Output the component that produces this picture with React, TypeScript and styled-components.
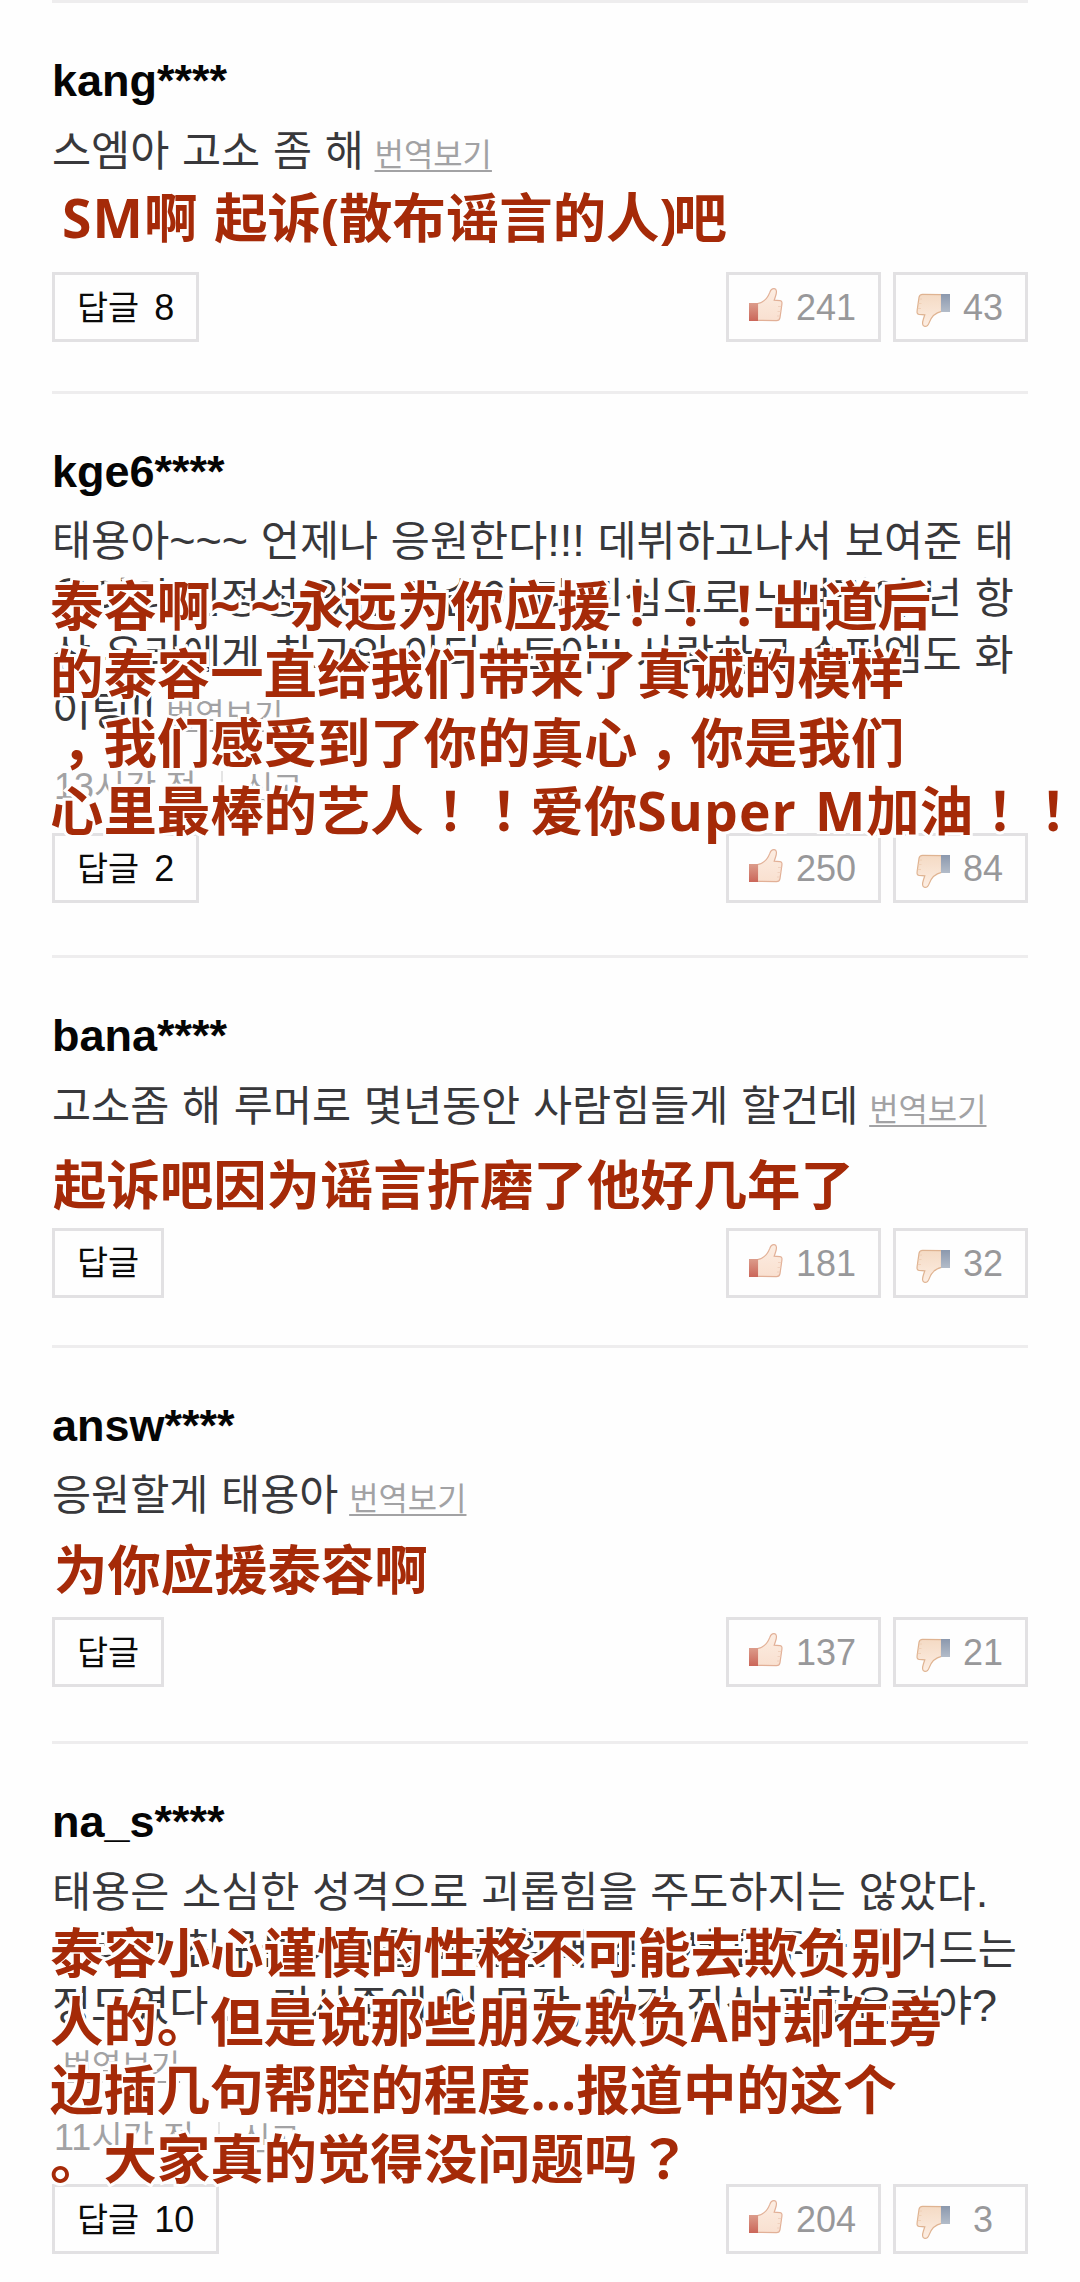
import React, { Fragment } from "react";
import styled, { createGlobalStyle } from "styled-components";

const latin = '"Liberation Sans", Arial';
const korean = `${latin}, "Noto Sans CJK KR", sans-serif`;
const chinese = '"Open Sans", "Noto Sans CJK SC", sans-serif';

const GlobalStyle = createGlobalStyle`
  body {
    margin: 0;
    background: #fefefe;
    font-family: ${korean};
  }
`;

const Page = styled.main`
  box-sizing: border-box;
  width: 1080px;
  height: 2282px;
  padding: 0 52px;
  overflow: hidden;
`;

const Item = styled.article<{ $after: number }>`
  position: relative;
  border-top: 3px solid #eeedee;
  padding: 53px 0 ${(p) => p.$after}px;
`;

const Author = styled.h2`
  margin: 0 0 17.5px;
  font: bold 45px/50px ${latin}, sans-serif;
  color: #050505;
`;

const Content = styled.div`
  font-size: 42.5px;
  word-spacing: 0.9px;
  color: #38383b;
  white-space: pre;
`;

const TextLine = styled.div`
  height: 56.8px;
  line-height: 56.8px;
`;

const Punctuation = styled.span`
  font-size: 45px;
  line-height: 0;
`;

const TranslateLink = styled.a`
  margin-left: -2px;
  font-size: 31.9px;
  line-height: 0;
  color: #a2a2a4;
  text-decoration: underline;
  text-decoration-thickness: 2px;
  text-underline-offset: 4px;
`;

const Meta = styled.div`
  display: flex;
  align-items: center;
  height: 44px;
  margin: 21.5px 0 26.5px;
  padding-left: 2px;
  font-size: 33.8px;
  color: #a2a2a4;
`;

const Divider = styled.span`
  width: 2px;
  height: 27px;
  margin: 0 21px 0 24px;
  background: #e4e4e4;
`;

const Report = styled.span`
  font-size: 31.9px;
`;

const Num = styled.span`
  font-size: 36px;
`;

const Actions = styled.div`
  display: flex;
  justify-content: space-between;
`;

const Votes = styled.div`
  display: flex;
  gap: 12px;
`;

const Button = styled.button`
  box-sizing: border-box;
  display: flex;
  align-items: center;
  height: 70px;
  border: 3px solid #e2e1e3;
  background: transparent;
  font-family: ${korean};
`;

const ReplyButton = styled(Button)`
  gap: 15px;
  padding: 0 22px;
  font-size: 33.8px;
  color: #0a0a0a;
`;

const ReplyLabel = styled.span`
  margin-bottom: 4px;
`;

const ReplyCount = styled(Num)`
  padding-top: 2px;
`;

const VoteButton = styled(Button)`
  gap: 13px;
  padding: 0 22px 0 20px;
  font-size: 36px;
  color: #98989a;
`;

const Count = styled.span`
  min-width: 40px;
  padding-top: 2px;
  text-align: center;
`;

const Translation = styled.div<{ $top: number; $left: number }>`
  position: absolute;
  top: ${(p) => p.$top}px;
  left: ${(p) => p.$left}px;
  font: bold 53.4px/68.5px ${chinese};
  color: #a52a08;
  word-spacing: 3px;
  white-space: pre;
  -webkit-text-stroke: 6px #fefefe;
  paint-order: stroke fill;
`;

const Line = styled.div`
  height: 68.5px;
`;

const CenteredMark = styled.span`
  font-family: "Noto Sans CJK TC", sans-serif;
  line-height: 0;
`;

const Comma = styled.span`
  display: inline-block;
  width: 1em;
  line-height: 1;
  text-indent: 0.22em;
`;

const Spaced = styled.span<{ $by: number }>`
  letter-spacing: ${(p) => p.$by}px;
`;

const Glyph = styled.svg<{ $drop: number }>`
  display: block;
  width: 34px;
  height: 34px;
  margin-top: ${(p) => p.$drop}px;
  overflow: visible;
`;

const HAND =
  "M8.5 15.6C14 14.4 18.6 10.4 20.8 4.4C21.8 1.4 23.4.5 25.2.6C28 .8 27.8 4.4 26.6 8L25.2 12.2L31 12.6C33 12.8 33.2 14.2 32.8 17L31 29.6C30.6 32 29.6 32.6 27.4 32.6L8.5 32.4Z";

function ThumbUp() {
  return (
    <Glyph $drop={-4} viewBox="0 0 34 34" aria-hidden="true">
      <defs>
        <linearGradient id="cuffUp" x1="0" y1="0" x2="0" y2="1">
          <stop offset="0" stopColor="#dc9c8b" />
          <stop offset="1" stopColor="#cb6659" />
        </linearGradient>
        <linearGradient id="skinUp" x1="0" y1="0" x2="0" y2="1">
          <stop offset="0" stopColor="#fcede2" />
          <stop offset="1" stopColor="#f9e0d0" />
        </linearGradient>
      </defs>
      <path d={HAND} fill="url(#skinUp)" stroke="#e2b097" strokeWidth="1.2" />
      <path d="M29 18.5h3.4M28.5 23.5h3M28 28h3" stroke="#eecbb7" strokeWidth="0.8" />
      <rect y="15" width="9" height="18" fill="url(#cuffUp)" />
    </Glyph>
  );
}

function ThumbDown() {
  return (
    <Glyph $drop={6} viewBox="0 0 34 34" aria-hidden="true">
      <defs>
        <linearGradient id="cuffDown" x1="0" y1="0" x2="0" y2="1">
          <stop offset="0" stopColor="#8b98ad" />
          <stop offset="1" stopColor="#b3bcc9" />
        </linearGradient>
        <linearGradient id="skinDown" x1="0" y1="0" x2="0" y2="1">
          <stop offset="0" stopColor="#fdeee3" />
          <stop offset="1" stopColor="#f4dac4" />
        </linearGradient>
      </defs>
      <g transform="rotate(180 17 17)">
        <path d={HAND} fill="url(#skinDown)" stroke="#dfb391" strokeWidth="1.2" />
        <path d="M29 18.5h3.4M28.5 23.5h3M28 28h3" stroke="#eecbb0" strokeWidth="0.8" />
      </g>
      <rect x="25" y="1" width="9" height="18" fill="url(#cuffDown)" />
    </Glyph>
  );
}

function Marked({ text }: { text: string }) {
  return (
    <>
      {text.split(/([！？]+|，|~+|[A-Za-z]+ ?|\))/).map((part, i) => {
        if (part === "，") return <Comma key={i}>{part}</Comma>;
        if (/^[！？]/.test(part)) return <CenteredMark key={i}>{part}</CenteredMark>;
        if (/^~/.test(part)) return <Spaced key={i} $by={9.5}>{part}</Spaced>;
        if (/^[A-Za-z]/.test(part)) return <Spaced key={i} $by={1.1}>{part}</Spaced>;
        if (part === ")") return <Spaced key={i} $by={-4}>{part}</Spaced>;
        return <Fragment key={i}>{part}</Fragment>;
      })}
    </>
  );
}

function Punctuated({ text }: { text: string }) {
  return (
    <>
      {text.split(/([~!?.]+)/).map((part, i) =>
        /^[~!?.]/.test(part) ? (
          <Punctuation key={i}>{part}</Punctuation>
        ) : (
          <Fragment key={i}>{part}</Fragment>
        )
      )}
    </>
  );
}

type Comment = {
  author: string;
  lines: string[];
  hours?: number;
  replies?: number;
  up: number;
  down: number;
  after: number;
  top: number;
  left: number;
  translation: string[];
};

const comments: Comment[] = [
  {
    author: "kang****",
    lines: ["스엠아 고소 좀 해 "],
    replies: 8,
    up: 241,
    down: 43,
    after: 48.3,
    top: 181,
    left: 10,
    translation: ["SM啊 起诉(散布谣言的人)吧"],
  },
  {
    author: "kge6****",
    lines: [
      "태용아~~~ 언제나 응원한다!!! 데뷔하고나서 보여준 태",
      "용이의 진정성 있는 모습이 다 진심으로 느껴졌어 넌 항",
      "상 우리에게 최고의 아티스트야!! 사랑하고 슈퍼엠도 화",
      "이팅!! ",
    ],
    hours: 13,
    replies: 2,
    up: 250,
    down: 84,
    after: 52,
    top: 178,
    left: -2,
    translation: [
      "泰容啊~~永远为你应援！！！出道后",
      "的泰容一直给我们带来了真诚的模样",
      "，我们感受到了你的真心，你是我们",
      "心里最棒的艺人！！爱你Super M加油！！",
    ],
  },
  {
    author: "bana****",
    lines: ["고소좀 해 루머로 몇년동안 사람힘들게 할건데 "],
    up: 181,
    down: 32,
    after: 47.4,
    top: 193,
    left: 1,
    translation: ["起诉吧因为谣言折磨了他好几年了"],
  },
  {
    author: "answ****",
    lines: ["응원할게 태용아 "],
    up: 137,
    down: 21,
    after: 54.2,
    top: 188,
    left: 2,
    translation: ["为你应援泰容啊"],
  },
  {
    author: "na_s****",
    lines: [
      "태용은 소심한 성격으로 괴롭힘을 주도하지는 않았다.",
      "그리고 친구들이 A를 괴롭힐때 옆에서 한두마디 거드는",
      "정도였다.... 기사중에 이 문장, 이건 진심 괜찮은거야?",
      "\u00a0",
    ],
    hours: 11,
    replies: 10,
    up: 204,
    down: 3,
    after: 28,
    top: 175,
    left: -2,
    translation: [
      "泰容小心谨慎的性格不可能去欺负别",
      "人的。但是说那些朋友欺负A时却在旁",
      "边插几句帮腔的程度...报道中的这个",
      "。大家真的觉得没问题吗？",
    ],
  },
];

function CommentItem({ c }: { c: Comment }) {
  return (
    <Item $after={c.after}>
      <Author>{c.author}</Author>
      <Content>
        {c.lines.map((line, i) => (
          <TextLine key={i}>
            <Punctuated text={line} />
            {i === c.lines.length - 1 && <TranslateLink>번역보기</TranslateLink>}
          </TextLine>
        ))}
      </Content>
      <Meta>
        {c.hours !== undefined && (
          <>
            <span>
              <Num>{c.hours}</Num>시간 전
            </span>
            <Divider />
            <Report>신고</Report>
          </>
        )}
      </Meta>
      <Actions>
        <ReplyButton>
          <ReplyLabel>답글</ReplyLabel>
          {c.replies !== undefined && <ReplyCount>{c.replies}</ReplyCount>}
        </ReplyButton>
        <Votes>
          <VoteButton>
            <ThumbUp />
            <Count>{c.up}</Count>
          </VoteButton>
          <VoteButton>
            <ThumbDown />
            <Count>{c.down}</Count>
          </VoteButton>
        </Votes>
      </Actions>
      <Translation $top={c.top} $left={c.left}>
        {c.translation.map((line) => (
          <Line key={line}>
            <Marked text={line} />
          </Line>
        ))}
      </Translation>
    </Item>
  );
}

export default function App() {
  return (
    <Page>
      <GlobalStyle />
      {comments.map((c) => (
        <CommentItem key={c.author} c={c} />
      ))}
    </Page>
  );
}
